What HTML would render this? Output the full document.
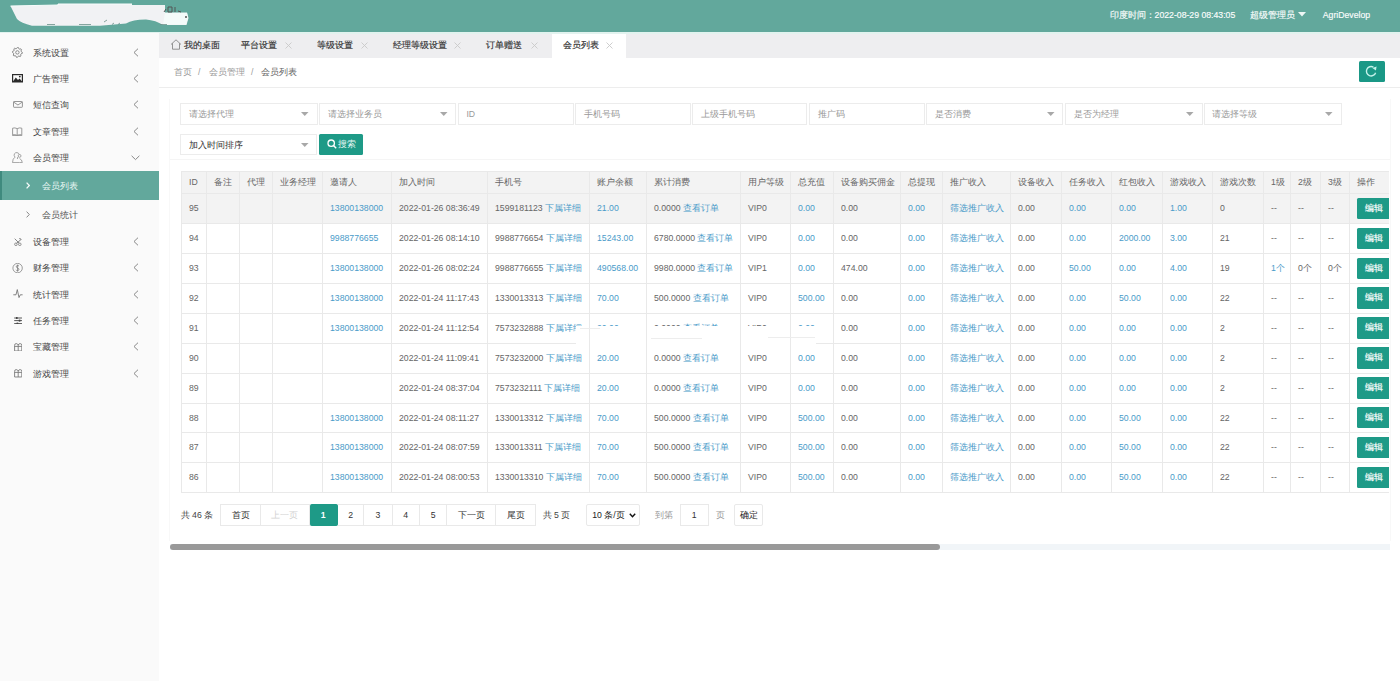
<!DOCTYPE html>
<html><head><meta charset="utf-8"><title>会员列表</title>
<style>
*{margin:0;padding:0;box-sizing:border-box}
html,body{width:1400px;height:681px;overflow:hidden;background:#fff;font-family:"Liberation Sans",sans-serif;font-size:8.7px;color:#666}
#hd{position:absolute;left:0;top:0;width:1400px;height:32px;background:#62a89c}
#hdline{position:absolute;left:0;top:32px;width:1400px;height:1.5px;background:#e2f3ef}
.hdt{position:absolute;top:10px;color:#fafdfc;-webkit-text-stroke:0.15px #fafdfc;font-size:8.7px;line-height:10px;white-space:nowrap}
#side{position:absolute;left:0;top:33px;width:159px;height:648px;background:#fafafa}
.mi{position:absolute;left:0;width:158px;height:26.3px}
.mi > .ic{position:absolute}
.mi > .mt{position:absolute;left:33px;top:8px;line-height:10px;color:#444;white-space:nowrap}
.mi > .ar{position:absolute;left:133px;top:8px;line-height:0}
.mi > .ar.dn{left:131px;top:10px}
.sub{position:absolute;left:0;width:159px;height:29px}
.sub.act{background:#62a89c;border-left:2px solid #3f8a7e}
.sub > .sar{position:absolute;left:26px;top:11px;line-height:0}
.sub.act > .sar{left:24px}
.sub > .st{position:absolute;left:42.4px;top:9.5px;line-height:10px;color:#555;white-space:nowrap}
.sub.act > .st{left:40.4px;color:#e8f7f3}
#tabs{position:absolute;left:159px;top:33.5px;width:1241px;height:24px;background:#eeeef0}
.tabact{position:absolute;left:393px;top:0;width:74px;height:24px;background:#fff}
.home{position:absolute;left:10.5px;top:5.5px}
.tt{position:absolute;top:6.5px;line-height:10px;color:#333;white-space:nowrap;-webkit-text-stroke:0.15px #333}
.tx{position:absolute;top:8px}
#crumb{position:absolute;left:159px;top:57.5px;width:1241px;height:30.3px;background:#fff;border-bottom:1.3px solid #ededed}
.cb{position:absolute;top:9.5px;line-height:10px;color:#999;white-space:nowrap}
#refresh{position:absolute;left:1358.7px;top:60.9px;width:26.3px;height:20.8px;background:#1a9886;border-radius:1.5px}
#panel{position:absolute;left:169px;top:99px;width:1222px;height:442px;border-left:1px solid #f8f8f8;border-right:1px solid #f8f8f8}
.tabs .tt{}
.inp{position:absolute;height:21.5px;border:1px solid #ececec;background:#fff}
.inp > .ph{position:absolute;left:7.5px;top:5px;line-height:10px;color:#999;white-space:nowrap}
.inp > .ph.dk{color:#333}
.inp > .tri{position:absolute;right:7.5px;top:8.2px;line-height:0}
.sbtn{position:absolute;left:319px;top:133.5px;width:44px;height:21.5px;background:#1e9a87;border-radius:1.5px;color:#e6f7f3}
.sbtn > svg{position:absolute;left:8px;top:5.5px}
.sbtn > span{position:absolute;left:19px;top:5.5px;line-height:10px;white-space:nowrap}
#fsep{position:absolute;left:170px;top:159px;width:1220px;height:1px;background:#f5f5f5}
#tbl{position:absolute;left:181px;top:171px;width:1208px;height:323px;overflow:hidden}
#tblin{position:absolute;left:0;top:0;width:1300px;border-left:1px solid #e9e9e9;border-top:1px solid #e9e9e9}
.tr{display:flex;height:29.9px;border-bottom:1px solid #e9e9e9}
.tr.th{height:22.3px;background:#f3f3f3}
.tr.hov{background:#f3f3f3}
.td{flex:none;border-right:1px solid #e9e9e9;padding-left:7px;white-space:nowrap;overflow:hidden;line-height:28.9px;color:#666}
.th .td{line-height:21.5px}
.th .td{color:#666}
.b{color:#4a9bc9}
.d{color:#666}
.edit{display:inline-block;vertical-align:middle;margin-top:-1px;margin-left:0;width:34px;height:21.5px;background:#1e9a87;color:#fff;border-radius:1.5px;line-height:21.5px;padding-left:7.5px;-webkit-text-stroke:0.15px #fff}
.ptxt{position:absolute;top:510px;line-height:10px;color:#444;white-space:nowrap}
.ptxt.lt{color:#999}
.pb{position:absolute;top:504px;height:21.5px;border:1px solid #e9e9e9;border-left:none;background:#fff;color:#333;text-align:center;line-height:21px}
.pb.first{border-left:1px solid #e9e9e9}
.pb.dis{color:#d2d2d2}
.pb.cur{background:#1e9a87;color:#fff;border-color:#1e9a87;font-weight:bold;border-radius:2px}
.psel{position:absolute;left:585.7px;top:504px;width:54px;height:21.5px;border:1px solid #e9e9e9;border-radius:2px;color:#222}
.psel > span{position:absolute;left:5.5px;top:5px;line-height:10px;white-space:nowrap}
.psel > svg{position:absolute;left:42px;top:8px}
.pinp{position:absolute;left:680px;top:504px;width:28.5px;height:21.5px;border:1px solid #e9e9e9;text-align:center;line-height:21px;color:#333}
.pok{position:absolute;left:734.3px;top:504px;width:29.2px;height:21.5px;border:1px solid #e9e9e9;text-align:center;line-height:21px;color:#222;border-radius:2px}
.ov{position:absolute;top:325.5px;height:19px;background:#fff}
.fl{position:absolute;height:1px;background:#ededed}
#sbtrack{position:absolute;left:170px;top:543.5px;width:1220px;height:6px;background:#f1f5f8}
#sbthumb{position:absolute;left:170px;top:543.5px;width:770px;height:6px;background:#999;border-radius:3px}
</style></head><body>
<div id="hd"><svg style="position:absolute;left:0;top:0" width="200" height="32" viewBox="0 0 200 32"><path d="M10.5 6 L58 5 L58 4 L132 4 L132 5 L165 5 L165 12.5 L187 12.5 L188.5 18 L186.5 25 L163 25 Q156 20.5 146 19.6 Q133 19.5 126 23.5 L100 25.7 L32 25.7 Q21 23 17 19 Z" fill="#f1f2f4"/><path d="M10.5 6 L58 5 L58 4 L132 4" fill="none" stroke="#f8fdfc" stroke-width="1"/><path d="M165 13 L187 13 L188 18 L186 24.5 L163 24.5" fill="#f5fbfa"/><path d="M164 12 L166 9 M168 7 L168 12 L172 12 L172 7 Z M175 7 L175 12 M178 11 L181 12" fill="none" stroke="#555" stroke-width="1"/><path d="M47 24.5 L55 24.5 M79 24.5 L91 24.5 M104 22 L107 20 M112 24.5 L114 23 M118 24.5 L120 23 M160 24.5 L167 24.5" stroke="#6a8f88" stroke-width="0.8"/><circle cx="186" cy="17" r="1" fill="#555"/></svg>
<span class="hdt" style="left:1110px">印度时间：</span><span class="hdt" style="left:1154.6px">2022-08-29 08:43:05</span>
<span class="hdt" style="left:1250px">超级管理员</span>
<svg style="position:absolute;left:1298px;top:12px" width="8" height="5" viewBox="0 0 8 5"><path d="M0 0 L8 0 L4 4.5 Z" fill="#eef7f5"/></svg>
<span class="hdt" style="left:1322.8px">AgriDevelop</span>
</div>
<div id="hdline"></div>
<div id="side"><div class="mi" style="top:6.6px"><svg class="ic" style="left:11.5px;top:7.0px" width="11" height="11" viewBox="0 0 11 11"><path d="M5.40 0.40 L6.38 0.50 L6.89 1.80 L7.57 2.16 L8.94 1.86 L9.56 2.62 L9.00 3.91 L9.23 4.64 L10.40 5.40 L10.30 6.38 L9.00 6.89 L8.64 7.57 L8.94 8.94 L8.18 9.56 L6.89 9.00 L6.16 9.23 L5.40 10.40 L4.42 10.30 L3.91 9.00 L3.23 8.64 L1.86 8.94 L1.24 8.18 L1.80 6.89 L1.57 6.16 L0.40 5.40 L0.50 4.42 L1.80 3.91 L2.16 3.23 L1.86 1.86 L2.62 1.24 L3.91 1.80 L4.64 1.57 Z" fill="none" stroke="#8a8a8a" stroke-width="1"/><circle cx="5.4" cy="5.4" r="1.7" fill="none" stroke="#8a8a8a" stroke-width="1"/></svg><span class="mt">系统设置</span><span class="ar"><svg width="6" height="9" viewBox="0 0 6 9"><path d="M5 0.7 L1 4.5 L5 8.3" fill="none" stroke="#888" stroke-width="1"/></svg></span></div><div class="mi" style="top:32.9px"><svg class="ic" style="left:12.4px;top:8.2px" width="11" height="8.5" viewBox="0 0 11 8.5"><rect x="0.6" y="0.6" width="9.8" height="7.3" fill="none" stroke="#2a2a2a" stroke-width="1.2"/><path d="M0.6 7.9 L3.8 3.6 L6 6 L7.6 4.6 L10.4 7.9 Z" fill="#2a2a2a"/><circle cx="7.8" cy="2.6" r="0.9" fill="#2a2a2a"/></svg><span class="mt">广告管理</span><span class="ar"><svg width="6" height="9" viewBox="0 0 6 9"><path d="M5 0.7 L1 4.5 L5 8.3" fill="none" stroke="#888" stroke-width="1"/></svg></span></div><div class="mi" style="top:59.2px"><svg class="ic" style="left:12.8px;top:9.2px" width="10" height="7" viewBox="0 0 10 7"><rect x="0.5" y="0.5" width="8.9" height="5.8" rx="0.6" fill="none" stroke="#8a8a8a" stroke-width="0.9"/><path d="M0.8 1.2 L4.95 4 L9.1 1.2" fill="none" stroke="#8a8a8a" stroke-width="0.9"/></svg><span class="mt">短信查询</span><span class="ar"><svg width="6" height="9" viewBox="0 0 6 9"><path d="M5 0.7 L1 4.5 L5 8.3" fill="none" stroke="#888" stroke-width="1"/></svg></span></div><div class="mi" style="top:85.5px"><svg class="ic" style="left:12.4px;top:8.2px" width="11" height="9" viewBox="0 0 11 9"><path d="M0.6 1.2 Q2.8 0.4 5.2 1.6 Q7.6 0.4 9.8 1.2 L9.8 7.8 Q7.6 7.2 5.2 8.3 Q2.8 7.2 0.6 7.8 Z M5.2 1.6 L5.2 8.3 M0.6 7.8 L0.6 8.6 L9.8 8.6 L9.8 7.8" fill="none" stroke="#909090" stroke-width="0.9"/></svg><span class="mt">文章管理</span><span class="ar"><svg width="6" height="9" viewBox="0 0 6 9"><path d="M5 0.7 L1 4.5 L5 8.3" fill="none" stroke="#888" stroke-width="1"/></svg></span></div><div class="mi" style="top:111.8px"><svg class="ic" style="left:12px;top:6.8px" width="11" height="11.5" viewBox="0 0 11 11.5"><path d="M3 5.2 Q1.6 3.4 2.4 1.8 Q3.4 0.4 5 0.6 Q6.8 0.8 7.2 2.6 M3 5.2 Q0.6 6.4 0.5 10.6 L7.6 10.6 M6 5 Q4.8 6 5.6 7" fill="none" stroke="#9a9a9a" stroke-width="0.9"/><circle cx="7.6" cy="3.9" r="1.4" fill="none" stroke="#9a9a9a" stroke-width="0.9"/><path d="M7.6 6.6 Q10 7.4 10.3 10.6 L7.6 10.6" fill="none" stroke="#9a9a9a" stroke-width="0.9"/></svg><span class="mt">会员管理</span><span class="ar dn"><svg width="9" height="6" viewBox="0 0 9 6"><path d="M0.6 0.8 L4.5 4.6 L8.4 0.8" fill="none" stroke="#888" stroke-width="1"/></svg></span></div><div class="sub act" style="top:138px"><span class="sar"><svg width="4" height="7" viewBox="0 0 4 7"><path d="M0.6 0.6 L3.3 3.5 L0.6 6.4" fill="none" stroke="#f4fbf9" stroke-width="1.3"/></svg></span><span class="st">会员列表</span></div><div class="sub" style="top:167px"><span class="sar"><svg width="4" height="7" viewBox="0 0 4 7"><path d="M0.6 0.6 L3.3 3.5 L0.6 6.4" fill="none" stroke="#888" stroke-width="1"/></svg></span><span class="st">会员统计</span></div><div class="mi" style="top:196.0px"><svg class="ic" style="left:13.6px;top:8.6px" width="8" height="8.2" viewBox="0 0 8 8.2"><path d="M0.7 0.7 L5.2 5.2 M7 1.6 L2.4 5.4 M5.2 0.6 Q7 0.2 7.3 2" fill="none" stroke="#888" stroke-width="1"/><circle cx="1.9" cy="6.3" r="1.3" fill="none" stroke="#888" stroke-width="0.9"/><circle cx="5.8" cy="6.3" r="1.3" fill="none" stroke="#888" stroke-width="0.9"/></svg><span class="mt">设备管理</span><span class="ar"><svg width="6" height="9" viewBox="0 0 6 9"><path d="M5 0.7 L1 4.5 L5 8.3" fill="none" stroke="#888" stroke-width="1"/></svg></span></div><div class="mi" style="top:222.3px"><svg class="ic" style="left:11.6px;top:7.6px" width="11.5" height="10.5" viewBox="0 0 11.5 10.5"><circle cx="5.6" cy="5.1" r="4.7" fill="none" stroke="#909090" stroke-width="0.9"/><path d="M7 3.2 Q6.4 2.4 5.5 2.5 Q4.2 2.6 4.3 3.7 Q4.4 4.6 5.6 5 Q7 5.4 6.9 6.5 Q6.8 7.6 5.5 7.6 Q4.4 7.6 4 6.8 M5.6 1.6 L5.6 8.6" fill="none" stroke="#808080" stroke-width="0.85"/></svg><span class="mt">财务管理</span><span class="ar"><svg width="6" height="9" viewBox="0 0 6 9"><path d="M5 0.7 L1 4.5 L5 8.3" fill="none" stroke="#888" stroke-width="1"/></svg></span></div><div class="mi" style="top:248.6px"><svg class="ic" style="left:12.6px;top:7.9px" width="10" height="9.2" viewBox="0 0 10 9.2"><path d="M0.3 5.8 L3 5.8 L4.3 0.6 L6 8.6 L7.3 5.8 L9.6 5.8" fill="none" stroke="#777" stroke-width="0.9"/></svg><span class="mt">统计管理</span><span class="ar"><svg width="6" height="9" viewBox="0 0 6 9"><path d="M5 0.7 L1 4.5 L5 8.3" fill="none" stroke="#888" stroke-width="1"/></svg></span></div><div class="mi" style="top:274.9px"><svg class="ic" style="left:13.6px;top:8.9px" width="8.2" height="7.6" viewBox="0 0 8.2 7.6"><path d="M0.2 1 L8 1 M0.2 3.6 L8 3.6 M0.2 6.6 L8 6.6" fill="none" stroke="#444" stroke-width="0.9"/><rect x="2" y="0" width="1.6" height="2" fill="#444"/><rect x="4.8" y="2.6" width="1.6" height="2" fill="#444"/><rect x="2.6" y="5.6" width="1.6" height="2" fill="#444"/></svg><span class="mt">任务管理</span><span class="ar"><svg width="6" height="9" viewBox="0 0 6 9"><path d="M5 0.7 L1 4.5 L5 8.3" fill="none" stroke="#888" stroke-width="1"/></svg></span></div><div class="mi" style="top:301.2px"><svg class="ic" style="left:13.6px;top:8.5px" width="8.4" height="8.6" viewBox="0 0 8.4 8.6"><path d="M0.6 2.6 Q0.4 0.6 2.2 0.6 Q3.6 0.6 4.2 2 Q4.8 0.6 6.2 0.6 Q8 0.6 7.8 2.6 L7.8 8 L0.6 8 Z M0.6 3.4 L7.8 3.4 M4.2 2 L4.2 8" fill="none" stroke="#7a7a7a" stroke-width="0.9"/></svg><span class="mt">宝藏管理</span><span class="ar"><svg width="6" height="9" viewBox="0 0 6 9"><path d="M5 0.7 L1 4.5 L5 8.3" fill="none" stroke="#888" stroke-width="1"/></svg></span></div><div class="mi" style="top:327.5px"><svg class="ic" style="left:13.6px;top:8.5px" width="8.4" height="8.6" viewBox="0 0 8.4 8.6"><path d="M0.6 2.6 Q0.4 0.6 2.2 0.6 Q3.6 0.6 4.2 2 Q4.8 0.6 6.2 0.6 Q8 0.6 7.8 2.6 L7.8 8 L0.6 8 Z M0.6 3.4 L7.8 3.4 M4.2 2 L4.2 8" fill="none" stroke="#7a7a7a" stroke-width="0.9"/></svg><span class="mt">游戏管理</span><span class="ar"><svg width="6" height="9" viewBox="0 0 6 9"><path d="M5 0.7 L1 4.5 L5 8.3" fill="none" stroke="#888" stroke-width="1"/></svg></span></div></div>
<div id="tabs"><div class="tabact"></div><svg class="home" width="12" height="11" viewBox="0 0 12 11"><path d="M1 5.5 L6 0.8 L11 5.5 M2.5 4.3 L2.5 10.2 L9.5 10.2 L9.5 4.3" fill="none" stroke="#888" stroke-width="0.9"/></svg><span class="tt" style="left:25.0px">我的桌面</span><span class="tt" style="left:81.7px">平台设置</span><svg class="tx" style="left:126.0px" width="7" height="7" viewBox="0 0 7 7"><path d="M0.5 0.5 L6.5 6.5 M6.5 0.5 L0.5 6.5" stroke="#c8c8c8" stroke-width="0.9"/></svg><span class="tt" style="left:157.7px">等级设置</span><svg class="tx" style="left:201.5px" width="7" height="7" viewBox="0 0 7 7"><path d="M0.5 0.5 L6.5 6.5 M6.5 0.5 L0.5 6.5" stroke="#c8c8c8" stroke-width="0.9"/></svg><span class="tt" style="left:233.5px">经理等级设置</span><svg class="tx" style="left:295.0px" width="7" height="7" viewBox="0 0 7 7"><path d="M0.5 0.5 L6.5 6.5 M6.5 0.5 L0.5 6.5" stroke="#c8c8c8" stroke-width="0.9"/></svg><span class="tt" style="left:327.4px">订单赠送</span><svg class="tx" style="left:371.7px" width="7" height="7" viewBox="0 0 7 7"><path d="M0.5 0.5 L6.5 6.5 M6.5 0.5 L0.5 6.5" stroke="#c8c8c8" stroke-width="0.9"/></svg><span class="tt" style="left:403.6px">会员列表</span><svg class="tx" style="left:447.4px" width="7" height="7" viewBox="0 0 7 7"><path d="M0.5 0.5 L6.5 6.5 M6.5 0.5 L0.5 6.5" stroke="#c8c8c8" stroke-width="0.9"/></svg></div>
<div id="crumb"><span class="cb" style="left:15.3px">首页</span><span class="cb" style="left:39px">/</span><span class="cb" style="left:49.6px">会员管理</span><span class="cb" style="left:92px">/</span><span class="cb" style="left:102px;color:#666">会员列表</span></div>
<div id="refresh"><svg style="position:absolute;left:0;top:0" width="27" height="21" viewBox="0 0 27 21"><path d="M16.6 11.7 A4.7 4.7 0 1 1 14.4 6.1" fill="none" stroke="#c4f2ea" stroke-width="1.4"/><path d="M13.4 6.9 L17.6 5.6 L16.9 9.6 Z" fill="#c4f2ea"/></svg></div>
<div id="panel"></div>
<div class="inp" style="left:180.4px;width:137.2px;top:103px"><span class="ph">请选择代理</span><span class=tri><svg width="8" height="5" viewBox="0 0 8 5"><path d="M0 0 L7.5 0 L3.75 4 Z" fill="#a8a8a8"/></svg></span></div><div class="inp" style="left:319.2px;width:136.9px;top:103px"><span class="ph">请选择业务员</span><span class=tri><svg width="8" height="5" viewBox="0 0 8 5"><path d="M0 0 L7.5 0 L3.75 4 Z" fill="#a8a8a8"/></svg></span></div><div class="inp" style="left:457.9px;width:116.1px;top:103px"><span class="ph">ID</span></div><div class="inp" style="left:575.0px;width:115.8px;top:103px"><span class="ph">手机号码</span></div><div class="inp" style="left:692.0px;width:115.2px;top:103px"><span class="ph">上级手机号码</span></div><div class="inp" style="left:809.0px;width:116.1px;top:103px"><span class="ph">推广码</span></div><div class="inp" style="left:926.0px;width:137.3px;top:103px"><span class="ph">是否消费</span><span class=tri><svg width="8" height="5" viewBox="0 0 8 5"><path d="M0 0 L7.5 0 L3.75 4 Z" fill="#a8a8a8"/></svg></span></div><div class="inp" style="left:1065.0px;width:137.6px;top:103px"><span class="ph">是否为经理</span><span class=tri><svg width="8" height="5" viewBox="0 0 8 5"><path d="M0 0 L7.5 0 L3.75 4 Z" fill="#a8a8a8"/></svg></span></div><div class="inp" style="left:1203.6px;width:138.2px;top:103px"><span class="ph">请选择等级</span><span class=tri><svg width="8" height="5" viewBox="0 0 8 5"><path d="M0 0 L7.5 0 L3.75 4 Z" fill="#a8a8a8"/></svg></span></div><div class="inp" style="left:180px;width:137px;top:133.5px"><span class="ph dk">加入时间排序</span><span class=tri><svg width="8" height="5" viewBox="0 0 8 5"><path d="M0 0 L7.5 0 L3.75 4 Z" fill="#a8a8a8"/></svg></span></div><div class="sbtn"><svg width="10" height="10" viewBox="0 0 10 10"><circle cx="4.2" cy="4.2" r="3.2" fill="none" stroke="#fff" stroke-width="1.3"/><path d="M6.5 6.5 L9.2 9.2" stroke="#fff" stroke-width="1.4"/></svg><span>搜索</span></div>
<div id="fsep"></div>
<div id="tbl"><div id="tblin"><div class="tr th"><div class="td" style="width:25px">ID</div><div class="td" style="width:33px">备注</div><div class="td" style="width:33px">代理</div><div class="td" style="width:50px">业务经理</div><div class="td" style="width:69px">邀请人</div><div class="td" style="width:96px">加入时间</div><div class="td" style="width:102px">手机号</div><div class="td" style="width:57px">账户余额</div><div class="td" style="width:94px">累计消费</div><div class="td" style="width:50px">用户等级</div><div class="td" style="width:43px">总充值</div><div class="td" style="width:67px">设备购买佣金</div><div class="td" style="width:42px">总提现</div><div class="td" style="width:68px">推广收入</div><div class="td" style="width:51px">设备收入</div><div class="td" style="width:50px">任务收入</div><div class="td" style="width:51px">红包收入</div><div class="td" style="width:50px">游戏收入</div><div class="td" style="width:51px">游戏次数</div><div class="td" style="width:27px">1级</div><div class="td" style="width:30px">2级</div><div class="td" style="width:29px">3级</div><div class="td" style="width:60px">操作</div></div><div class="tr hov"><div class="td" style="width:25px">95</div><div class="td" style="width:33px"></div><div class="td" style="width:33px"></div><div class="td" style="width:50px"></div><div class="td" style="width:69px"><span class="b">13800138000</span></div><div class="td" style="width:96px">2022-01-26 08:36:49</div><div class="td" style="width:102px">1599181123 <span class="b">下属详细</span></div><div class="td" style="width:57px"><span class="b">21.00</span></div><div class="td" style="width:94px">0.0000 <span class="b">查看订单</span></div><div class="td" style="width:50px">VIP0</div><div class="td" style="width:43px"><span class="b">0.00</span></div><div class="td" style="width:67px">0.00</div><div class="td" style="width:42px"><span class="b">0.00</span></div><div class="td" style="width:68px"><span class="b">筛选推广收入</span></div><div class="td" style="width:51px">0.00</div><div class="td" style="width:50px"><span class="b">0.00</span></div><div class="td" style="width:51px"><span class="b">0.00</span></div><div class="td" style="width:50px"><span class="b">1.00</span></div><div class="td" style="width:51px">0</div><div class="td" style="width:27px"><span class="d">--</span></div><div class="td" style="width:30px"><span class="d">--</span></div><div class="td" style="width:29px"><span class="d">--</span></div><div class="td" style="width:60px"><span class="edit">编辑</span></div></div><div class="tr"><div class="td" style="width:25px">94</div><div class="td" style="width:33px"></div><div class="td" style="width:33px"></div><div class="td" style="width:50px"></div><div class="td" style="width:69px"><span class="b">9988776655</span></div><div class="td" style="width:96px">2022-01-26 08:14:10</div><div class="td" style="width:102px">9988776654 <span class="b">下属详细</span></div><div class="td" style="width:57px"><span class="b">15243.00</span></div><div class="td" style="width:94px">6780.0000 <span class="b">查看订单</span></div><div class="td" style="width:50px">VIP0</div><div class="td" style="width:43px"><span class="b">0.00</span></div><div class="td" style="width:67px">0.00</div><div class="td" style="width:42px"><span class="b">0.00</span></div><div class="td" style="width:68px"><span class="b">筛选推广收入</span></div><div class="td" style="width:51px">0.00</div><div class="td" style="width:50px"><span class="b">0.00</span></div><div class="td" style="width:51px"><span class="b">2000.00</span></div><div class="td" style="width:50px"><span class="b">3.00</span></div><div class="td" style="width:51px">21</div><div class="td" style="width:27px"><span class="d">--</span></div><div class="td" style="width:30px"><span class="d">--</span></div><div class="td" style="width:29px"><span class="d">--</span></div><div class="td" style="width:60px"><span class="edit">编辑</span></div></div><div class="tr"><div class="td" style="width:25px">93</div><div class="td" style="width:33px"></div><div class="td" style="width:33px"></div><div class="td" style="width:50px"></div><div class="td" style="width:69px"><span class="b">13800138000</span></div><div class="td" style="width:96px">2022-01-26 08:02:24</div><div class="td" style="width:102px">9988776655 <span class="b">下属详细</span></div><div class="td" style="width:57px"><span class="b">490568.00</span></div><div class="td" style="width:94px">9980.0000 <span class="b">查看订单</span></div><div class="td" style="width:50px">VIP1</div><div class="td" style="width:43px"><span class="b">0.00</span></div><div class="td" style="width:67px">474.00</div><div class="td" style="width:42px"><span class="b">0.00</span></div><div class="td" style="width:68px"><span class="b">筛选推广收入</span></div><div class="td" style="width:51px">0.00</div><div class="td" style="width:50px"><span class="b">50.00</span></div><div class="td" style="width:51px"><span class="b">0.00</span></div><div class="td" style="width:50px"><span class="b">4.00</span></div><div class="td" style="width:51px">19</div><div class="td" style="width:27px"><span class="b">1个</span></div><div class="td" style="width:30px"><span class="">0个</span></div><div class="td" style="width:29px"><span class="">0个</span></div><div class="td" style="width:60px"><span class="edit">编辑</span></div></div><div class="tr"><div class="td" style="width:25px">92</div><div class="td" style="width:33px"></div><div class="td" style="width:33px"></div><div class="td" style="width:50px"></div><div class="td" style="width:69px"><span class="b">13800138000</span></div><div class="td" style="width:96px">2022-01-24 11:17:43</div><div class="td" style="width:102px">1330013313 <span class="b">下属详细</span></div><div class="td" style="width:57px"><span class="b">70.00</span></div><div class="td" style="width:94px">500.0000 <span class="b">查看订单</span></div><div class="td" style="width:50px">VIP0</div><div class="td" style="width:43px"><span class="b">500.00</span></div><div class="td" style="width:67px">0.00</div><div class="td" style="width:42px"><span class="b">0.00</span></div><div class="td" style="width:68px"><span class="b">筛选推广收入</span></div><div class="td" style="width:51px">0.00</div><div class="td" style="width:50px"><span class="b">0.00</span></div><div class="td" style="width:51px"><span class="b">50.00</span></div><div class="td" style="width:50px"><span class="b">0.00</span></div><div class="td" style="width:51px">22</div><div class="td" style="width:27px"><span class="d">--</span></div><div class="td" style="width:30px"><span class="d">--</span></div><div class="td" style="width:29px"><span class="d">--</span></div><div class="td" style="width:60px"><span class="edit">编辑</span></div></div><div class="tr"><div class="td" style="width:25px">91</div><div class="td" style="width:33px"></div><div class="td" style="width:33px"></div><div class="td" style="width:50px"></div><div class="td" style="width:69px"><span class="b">13800138000</span></div><div class="td" style="width:96px">2022-01-24 11:12:54</div><div class="td" style="width:102px">7573232888 <span class="b">下属详细</span></div><div class="td" style="width:57px"><span class="b">20.00</span></div><div class="td" style="width:94px">0.0000 <span class="b">查看订单</span></div><div class="td" style="width:50px">VIP0</div><div class="td" style="width:43px"><span class="b">0.00</span></div><div class="td" style="width:67px">0.00</div><div class="td" style="width:42px"><span class="b">0.00</span></div><div class="td" style="width:68px"><span class="b">筛选推广收入</span></div><div class="td" style="width:51px">0.00</div><div class="td" style="width:50px"><span class="b">0.00</span></div><div class="td" style="width:51px"><span class="b">0.00</span></div><div class="td" style="width:50px"><span class="b">0.00</span></div><div class="td" style="width:51px">2</div><div class="td" style="width:27px"><span class="d">--</span></div><div class="td" style="width:30px"><span class="d">--</span></div><div class="td" style="width:29px"><span class="d">--</span></div><div class="td" style="width:60px"><span class="edit">编辑</span></div></div><div class="tr"><div class="td" style="width:25px">90</div><div class="td" style="width:33px"></div><div class="td" style="width:33px"></div><div class="td" style="width:50px"></div><div class="td" style="width:69px"></div><div class="td" style="width:96px">2022-01-24 11:09:41</div><div class="td" style="width:102px">7573232000 <span class="b">下属详细</span></div><div class="td" style="width:57px"><span class="b">20.00</span></div><div class="td" style="width:94px">0.0000 <span class="b">查看订单</span></div><div class="td" style="width:50px">VIP0</div><div class="td" style="width:43px"><span class="b">0.00</span></div><div class="td" style="width:67px">0.00</div><div class="td" style="width:42px"><span class="b">0.00</span></div><div class="td" style="width:68px"><span class="b">筛选推广收入</span></div><div class="td" style="width:51px">0.00</div><div class="td" style="width:50px"><span class="b">0.00</span></div><div class="td" style="width:51px"><span class="b">0.00</span></div><div class="td" style="width:50px"><span class="b">0.00</span></div><div class="td" style="width:51px">2</div><div class="td" style="width:27px"><span class="d">--</span></div><div class="td" style="width:30px"><span class="d">--</span></div><div class="td" style="width:29px"><span class="d">--</span></div><div class="td" style="width:60px"><span class="edit">编辑</span></div></div><div class="tr"><div class="td" style="width:25px">89</div><div class="td" style="width:33px"></div><div class="td" style="width:33px"></div><div class="td" style="width:50px"></div><div class="td" style="width:69px"></div><div class="td" style="width:96px">2022-01-24 08:37:04</div><div class="td" style="width:102px">7573232111 <span class="b">下属详细</span></div><div class="td" style="width:57px"><span class="b">20.00</span></div><div class="td" style="width:94px">0.0000 <span class="b">查看订单</span></div><div class="td" style="width:50px">VIP0</div><div class="td" style="width:43px"><span class="b">0.00</span></div><div class="td" style="width:67px">0.00</div><div class="td" style="width:42px"><span class="b">0.00</span></div><div class="td" style="width:68px"><span class="b">筛选推广收入</span></div><div class="td" style="width:51px">0.00</div><div class="td" style="width:50px"><span class="b">0.00</span></div><div class="td" style="width:51px"><span class="b">0.00</span></div><div class="td" style="width:50px"><span class="b">0.00</span></div><div class="td" style="width:51px">2</div><div class="td" style="width:27px"><span class="d">--</span></div><div class="td" style="width:30px"><span class="d">--</span></div><div class="td" style="width:29px"><span class="d">--</span></div><div class="td" style="width:60px"><span class="edit">编辑</span></div></div><div class="tr"><div class="td" style="width:25px">88</div><div class="td" style="width:33px"></div><div class="td" style="width:33px"></div><div class="td" style="width:50px"></div><div class="td" style="width:69px"><span class="b">13800138000</span></div><div class="td" style="width:96px">2022-01-24 08:11:27</div><div class="td" style="width:102px">1330013312 <span class="b">下属详细</span></div><div class="td" style="width:57px"><span class="b">70.00</span></div><div class="td" style="width:94px">500.0000 <span class="b">查看订单</span></div><div class="td" style="width:50px">VIP0</div><div class="td" style="width:43px"><span class="b">500.00</span></div><div class="td" style="width:67px">0.00</div><div class="td" style="width:42px"><span class="b">0.00</span></div><div class="td" style="width:68px"><span class="b">筛选推广收入</span></div><div class="td" style="width:51px">0.00</div><div class="td" style="width:50px"><span class="b">0.00</span></div><div class="td" style="width:51px"><span class="b">50.00</span></div><div class="td" style="width:50px"><span class="b">0.00</span></div><div class="td" style="width:51px">22</div><div class="td" style="width:27px"><span class="d">--</span></div><div class="td" style="width:30px"><span class="d">--</span></div><div class="td" style="width:29px"><span class="d">--</span></div><div class="td" style="width:60px"><span class="edit">编辑</span></div></div><div class="tr"><div class="td" style="width:25px">87</div><div class="td" style="width:33px"></div><div class="td" style="width:33px"></div><div class="td" style="width:50px"></div><div class="td" style="width:69px"><span class="b">13800138000</span></div><div class="td" style="width:96px">2022-01-24 08:07:59</div><div class="td" style="width:102px">1330013311 <span class="b">下属详细</span></div><div class="td" style="width:57px"><span class="b">70.00</span></div><div class="td" style="width:94px">500.0000 <span class="b">查看订单</span></div><div class="td" style="width:50px">VIP0</div><div class="td" style="width:43px"><span class="b">500.00</span></div><div class="td" style="width:67px">0.00</div><div class="td" style="width:42px"><span class="b">0.00</span></div><div class="td" style="width:68px"><span class="b">筛选推广收入</span></div><div class="td" style="width:51px">0.00</div><div class="td" style="width:50px"><span class="b">0.00</span></div><div class="td" style="width:51px"><span class="b">50.00</span></div><div class="td" style="width:50px"><span class="b">0.00</span></div><div class="td" style="width:51px">22</div><div class="td" style="width:27px"><span class="d">--</span></div><div class="td" style="width:30px"><span class="d">--</span></div><div class="td" style="width:29px"><span class="d">--</span></div><div class="td" style="width:60px"><span class="edit">编辑</span></div></div><div class="tr"><div class="td" style="width:25px">86</div><div class="td" style="width:33px"></div><div class="td" style="width:33px"></div><div class="td" style="width:50px"></div><div class="td" style="width:69px"><span class="b">13800138000</span></div><div class="td" style="width:96px">2022-01-24 08:00:53</div><div class="td" style="width:102px">1330013310 <span class="b">下属详细</span></div><div class="td" style="width:57px"><span class="b">70.00</span></div><div class="td" style="width:94px">500.0000 <span class="b">查看订单</span></div><div class="td" style="width:50px">VIP0</div><div class="td" style="width:43px"><span class="b">500.00</span></div><div class="td" style="width:67px">0.00</div><div class="td" style="width:42px"><span class="b">0.00</span></div><div class="td" style="width:68px"><span class="b">筛选推广收入</span></div><div class="td" style="width:51px">0.00</div><div class="td" style="width:50px"><span class="b">0.00</span></div><div class="td" style="width:51px"><span class="b">50.00</span></div><div class="td" style="width:50px"><span class="b">0.00</span></div><div class="td" style="width:51px">22</div><div class="td" style="width:27px"><span class="d">--</span></div><div class="td" style="width:30px"><span class="d">--</span></div><div class="td" style="width:29px"><span class="d">--</span></div><div class="td" style="width:60px"><span class="edit">编辑</span></div></div></div></div>
<div class="ov" style="left:576px;width:13px"></div><div class="ov" style="left:590px;width:56px"></div><div class="ov" style="left:647px;width:93px"></div><div class="ov" style="left:741px;width:49px"></div><div class="ov" style="left:791px;width:25px"></div>
<div class="fl" style="left:651px;top:337.5px;width:51px"></div><div class="fl" style="left:768px;top:337px;width:47px"></div><div class="fl" style="left:580px;top:328px;width:20px"></div>
<span class="ptxt" style="left:181px">共</span><span class="ptxt" style="left:192.1px">46</span><span class="ptxt" style="left:204.2px">条</span><div class="pb first" style="left:220.3px;width:40.7px">首页</div><div class="pb dis" style="left:261.0px;width:48.6px">上一页</div><div class="pb cur" style="left:309.6px;width:28.4px">1</div><div class="pb " style="left:338.0px;width:26.3px">2</div><div class="pb " style="left:364.3px;width:28.3px">3</div><div class="pb " style="left:392.6px;width:27.4px">4</div><div class="pb " style="left:420.0px;width:27.3px">5</div><div class="pb " style="left:447.3px;width:49.0px">下一页</div><div class="pb " style="left:496.3px;width:39.7px">尾页</div><span class="ptxt" style="left:543px">共</span><span class="ptxt" style="left:554.1px">5</span><span class="ptxt" style="left:561.4px">页</span><div class="psel"><span>10 条/页</span><svg width="7" height="5" viewBox="0 0 7 5"><path d="M0.8 0.8 L3.5 3.8 L6.2 0.8" fill="none" stroke="#111" stroke-width="1.4"/></svg></div><span class="ptxt lt" style="left:655px">到第</span><div class="pinp">1</div><span class="ptxt lt" style="left:715.6px">页</span><div class="pok">确定</div>
<div id="sbtrack"></div><div id="sbthumb"></div>
</body></html>
